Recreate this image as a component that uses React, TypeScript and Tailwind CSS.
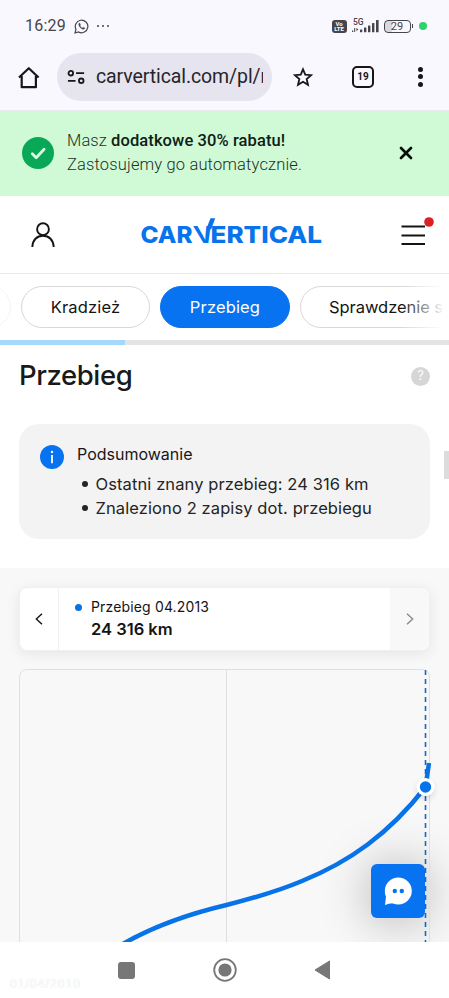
import type { ReactNode } from 'react'
import clsx from 'clsx'

const summary = ['Ostatni znany przebieg: 24 316 km', 'Znaleziono 2 zapisy dot. przebiegu']

function StatusBar() {
  return (
    <div className="flex h-[52px] items-center justify-between pl-[25px] pr-[22px] font-['Roboto',sans-serif] text-[#45454b]">
      <div className="flex items-center">
        <span className="w-[49px] text-[16px] tracking-[0.2px]">16:29</span>
        <svg width="15" height="15" viewBox="0 0 15 15" fill="none" stroke="currentColor">
          <path d="M1 14l1-3.6A6.3 6.3 0 1 1 4.6 13L1 14z" strokeWidth="1.2" />
          <path d="M5.1 4.2c-1.2 1.3.3 3.5 1.6 4.7 1.3 1.2 3.2 2 4.1.7.5-.7-.9-1.3-1.4-1.4l-.9.8C7.5 8.6 6.7 7.9 6 6.9l.6-.9c-.2-.5-.8-2.3-1.5-1.8z" fill="currentColor" strokeWidth="0.3" />
        </svg>
        <div className="ml-2 flex gap-[3px]">
          <i className="size-[2px] rounded-full bg-current" />
          <i className="size-[2px] rounded-full bg-current" />
          <i className="size-[2px] rounded-full bg-current" />
        </div>
      </div>
      <div className="flex items-center">
        <div className="flex h-[13px] w-[15px] flex-col items-center justify-center rounded-[3px] bg-[#45454b] text-[6px] font-bold leading-[5.5px] text-white">
          <span>Vo</span>
          <span>LTE</span>
        </div>
        <svg className="ml-[5px]" width="27" height="16" viewBox="0 0 27 16" fill="currentColor">
          <text x="1" y="7" fontSize="8.5" fontWeight="500">5G</text>
          <path d="M0 12.5h1.2v1.5H0zM2.2 10h1v4h-1zM4.4 10l2 1.5-2 1.5z" />
          <rect x="8" y="11.5" width="2.3" height="2.8" rx=".5" />
          <rect x="12" y="9.5" width="2.4" height="4.8" rx=".5" />
          <rect x="16" y="7.5" width="2.4" height="6.8" rx=".5" />
          <rect x="20" y="5" width="2.4" height="9.3" rx=".5" />
          <rect x="24" y="2" width="2.6" height="12.3" rx=".5" />
        </svg>
        <div className="ml-[5px] flex h-[13px] w-[27px] items-center justify-center rounded-[4px] border-[1.5px] border-current bg-linear-to-r from-[#d9d9e0] from-30% to-transparent to-30% text-[11px] leading-none">
          29
        </div>
        <i className="ml-px h-[4px] w-[1.5px] bg-current" />
        <i className="ml-[6px] size-2 rounded-full bg-[#2fd267]" />
      </div>
    </div>
  )
}

function BrowserBar() {
  return (
    <div className="flex h-[59px] items-center border-b border-[#e9edf2] pb-[9px] pl-[18px] text-[#17171a]">
      <svg width="22" height="24" viewBox="0 0 22 24" fill="none" stroke="currentColor" strokeWidth="2.2">
        <path d="M1 12.5L10.8 3.2l9.8 9.3M3.7 11v11.2h14.2V11" strokeLinejoin="round" />
      </svg>
      <div className="ml-[17px] flex h-12 w-[215px] shrink-0 items-center rounded-full bg-[#e6e4ee] pl-[10px]">
        <svg width="19" height="16" viewBox="0 0 20 16" fill="none" stroke="currentColor" strokeWidth="1.9">
          <circle cx="4" cy="4" r="2.4" />
          <path d="M9.5 4H18M1 12h8" />
          <circle cx="15" cy="12" r="2.4" />
        </svg>
        <div className="ml-[10px] w-[167px] overflow-hidden whitespace-nowrap font-['Roboto',sans-serif] text-[19.5px] tracking-[-0.1px] text-[#25252b]">
          carvertical.com/pl/r
        </div>
      </div>
      <svg className="ml-[21px]" width="20" height="20" viewBox="0 0 20 20" fill="none" stroke="currentColor" strokeWidth="1.8">
        <path d="M10 2.3l2.25 5.4 5.85.5-4.45 3.85 1.35 5.75L10 14.75 5 17.8l1.35-5.75L1.9 8.2l5.85-.5z" />
      </svg>
      <div className="ml-[39px] flex size-[22px] items-center justify-center rounded-[5px] border-2 border-current font-['Roboto',sans-serif] text-[10px] font-bold">
        19
      </div>
      <div className="ml-[44px] flex flex-col gap-[2.5px]">
        <i className="size-[5px] rounded-full bg-current" />
        <i className="size-[5px] rounded-full bg-current" />
        <i className="size-[5px] rounded-full bg-current" />
      </div>
    </div>
  )
}

function Banner() {
  return (
    <div className="flex h-[85px] items-center bg-[#d0fad6] pb-[2px] pl-[22px] pr-[36px]">
      <svg width="32" height="32" viewBox="0 0 32 32">
        <circle cx="16" cy="16" r="16" fill="#09a857" />
        <path d="M10.3 16.8l3.9 3.9 7.9-8.4" fill="none" stroke="#d9fbe0" strokeWidth="2.8" strokeLinecap="round" strokeLinejoin="round" />
      </svg>
      <p className="ml-[13px] grow whitespace-nowrap font-['Roboto',sans-serif] text-[16.5px] font-light leading-6 text-[#1d3024]">
        <span className="tracking-[0.1px]">
          Masz <b className="font-medium text-[#0d2015]">dodatkowe 30% rabatu!</b>
        </span>
        <br />
        <span className="tracking-[0.15px]">Zastosujemy go automatycznie.</span>
      </p>
      <svg width="14" height="14" viewBox="0 0 14 14" stroke="#050d08" strokeWidth="2.7" strokeLinecap="round">
        <path d="M2 2l10 10M12 2L2 12" />
      </svg>
    </div>
  )
}

function Header() {
  return (
    <header className="flex h-[78px] items-center justify-between border-b border-[#e9e9e9] pl-[31px] pr-[15px]">
      <svg width="24" height="26" viewBox="0 0 24 26" fill="none" stroke="#141414" strokeWidth="1.9">
        <circle cx="12" cy="7.2" r="5.9" />
        <path d="M1.3 25c.3-7 4.6-11.3 10.7-11.3S22.4 18 22.7 25" />
      </svg>
      <svg className="ml-[7px]" width="184" height="34" viewBox="0 0 184 34" fill="#0873eb" fontFamily="Inter, sans-serif" fontSize="23.5" fontWeight="800">
        <text x="0.5" y="24.8" textLength="52" lengthAdjust="spacingAndGlyphs">CAR</text>
        <text transform="translate(56.5 24.8) skewX(13)" fontWeight="700" textLength="18.5" lengthAdjust="spacingAndGlyphs">V</text>
        <path d="M70.5 .3h4.7l-4 11h-5z" />
        <text x="70.5" y="24.8" textLength="111.5" lengthAdjust="spacingAndGlyphs">ERTICAL</text>
      </svg>
      <svg className="-mt-2" width="33" height="30" viewBox="0 0 33 30">
        <path d="M.5 10.5h23.5M.5 19.5h23.5M.5 28h23.5" stroke="#141414" strokeWidth="1.9" />
        <circle cx="28" cy="6" r="4.8" fill="#db1f26" />
      </svg>
    </header>
  )
}

function Tab({ active, className, children }: { active?: boolean; className: string; children?: ReactNode }) {
  return (
    <div
      className={clsx(
        'flex h-[42px] shrink-0 items-center justify-center rounded-full border text-[16.5px] tracking-[0.15px] whitespace-nowrap',
        active ? 'border-[#0873f0] bg-[#0873f0] text-white' : 'border-[#d8d8d8] bg-white text-[#141414]',
        className,
      )}
    >
      {children}
    </div>
  )
}

function Tabs() {
  return (
    <nav>
      <div className="relative flex h-[66px] items-center gap-[10px] overflow-hidden">
        <Tab className="-ml-[88px] w-[99px] opacity-30" />
        <Tab className="w-[129px]">Kradzież</Tab>
        <Tab active className="w-[130px]">Przebieg</Tab>
        <Tab className="w-[190px] justify-start! pl-[28px] tracking-[-0.05px]!">Sprawdzenie stanu</Tab>
        <div className="absolute right-0 top-0 h-full w-[48px] bg-linear-to-r from-transparent to-white to-90%" />
      </div>
      <div className="h-[5px] bg-[#e4e4e4]">
        <div className="h-full w-[125px] bg-[#a6d8fb]" />
      </div>
    </nav>
  )
}

function Summary() {
  return (
    <section className="relative h-[223px] px-[19px] pt-[13px]">
      <div className="flex h-9 items-center justify-between">
        <h1 className="text-[27.5px] font-medium tracking-[-0.4px] text-[#191919]">Przebieg</h1>
        <div className="flex size-[19px] items-center justify-center rounded-full bg-[#d6d6d6] text-[13px] text-white">?</div>
      </div>
      <div className="mt-[30px] flex h-[115px] rounded-[20px] bg-[#f3f3f3] pl-[21px] pt-[18px] text-[#242424]">
        <svg className="mt-[3px]" width="24" height="24" viewBox="0 0 24 24">
          <circle cx="12" cy="12" r="12" fill="#0873f0" />
          <path d="M12 10v8.2" stroke="#fff" strokeWidth="1.8" />
          <circle cx="12" cy="7" r="1.2" fill="#fff" />
        </svg>
        <div className="ml-[13px]">
          <h2 className="text-[16px] leading-6 text-[#181818]">Podsumowanie</h2>
          <ul className="mt-[6px] text-[16.5px] leading-6 tracking-[0.1px]">
            {summary.map((line) => (
              <li key={line} className="flex items-center whitespace-nowrap">
                <i className="ml-[5px] mr-[8px] size-[5.5px] rounded-full bg-current" />
                {line}
              </li>
            ))}
          </ul>
        </div>
      </div>
      <div className="absolute right-0 top-[106px] h-[28px] w-[5px] bg-[#dcdcdc]" />
    </section>
  )
}

function Chart() {
  return (
    <div className="relative mt-[18px] h-[273px]">
      <div className="absolute left-[352px] top-[195px] size-[54px] rounded-[6px] bg-[#0873f0] shadow-[0_2px_50px_rgba(0,0,0,0.3)]" />
      <svg className="absolute inset-0" width="430" height="273" viewBox="0 0 430 273" fill="none">
        <path d="M.5 273V9q0-8.5 8-8.5h394q8 0 8 8.5v264M207.5 1v272" stroke="#dfdfdf" />
        <path d="M102 276C133 258 165 246 207.5 236C235 229 262 221 283 212C330 193 370 165 406.5 118L410 94" stroke="#0873e8" strokeWidth="4.5" />
        <path d="M406.5 1v272" stroke="#1268ca" strokeWidth="1.6" strokeDasharray="5 4" />
        <circle cx="406.5" cy="118" r="9" fill="#fff" className="drop-shadow-md" />
        <circle cx="406.5" cy="118" r="5.7" fill="#0873e8" />
        <circle cx="379.3" cy="222" r="13.5" fill="#fff" />
        <path d="M366 236l1.3-11 8 9.3q-4.500-.5-9.300 1.700z" fill="#fff" />
        <circle cx="375.8" cy="222" r="2.2" fill="#0873f0" />
        <circle cx="382.8" cy="222" r="2.2" fill="#0873f0" />
      </svg>
    </div>
  )
}

function Mileage() {
  return (
    <section className="h-[374px] overflow-hidden bg-[#f8f8f8] px-[19px] pt-[19px]">
      <div className="flex h-[64px] rounded-[8px] border border-[#f0f0f0] bg-white shadow-[0_3px_14px_rgba(0,0,0,0.08)]">
        <div className="flex w-[39px] items-center justify-center border-r border-[#f1f1f1]">
          <svg width="8" height="12" viewBox="0 0 8 12" fill="none" stroke="#151515" strokeWidth="1.4">
            <path d="M7 .7L1.3 6 7 11.3" />
          </svg>
        </div>
        <div className="grow pl-[16px] pt-[9px] text-[#141414]">
          <div className="flex items-center text-[14px] leading-5 tracking-[0.15px]">
            <i className="mr-[9px] size-[7px] rounded-full bg-[#0873e0]" />
            Przebieg 04.2013
          </div>
          <div className="ml-[16px] text-[16.5px] font-semibold leading-6">24 316 km</div>
        </div>
        <div className="flex w-[39px] items-center justify-center rounded-r-[8px] bg-[#f8f8f8]">
          <svg width="8" height="12" viewBox="0 0 8 12" fill="none" stroke="#888" strokeWidth="1.3">
            <path d="M1 .7L6.7 6 1 11.3" />
          </svg>
        </div>
      </div>
      <Chart />
    </section>
  )
}

function NavBar() {
  return (
    <footer className="relative flex h-[56px] items-center justify-between bg-white px-[118px]">
      <div className="size-[17px] rounded-[3px] bg-[#777]" />
      <svg width="24" height="24" viewBox="0 0 24 24">
        <circle cx="12" cy="12" r="10.8" fill="none" stroke="#777" strokeWidth="1.8" />
        <circle cx="12" cy="12" r="6.6" fill="#777" />
      </svg>
      <svg width="17" height="20" viewBox="0 0 17 20">
        <path d="M15.5 1v18L1 10z" fill="#777" stroke="#777" strokeLinejoin="round" />
      </svg>
      <span className="absolute bottom-[5px] left-[10px] font-['Liberation_Sans',sans-serif] text-[12px] tracking-[1.1px] text-white [text-shadow:0_0_1px_#d4d4d4]">
        01/04/2010
      </span>
    </footer>
  )
}

export default function App() {
  return (
    <div className="h-[998px] w-[449px] overflow-hidden bg-white font-['Inter',sans-serif]">
      <div className="bg-[#f9f8ff]">
        <StatusBar />
        <BrowserBar />
      </div>
      <Banner />
      <Header />
      <Tabs />
      <Summary />
      <Mileage />
      <NavBar />
    </div>
  )
}
